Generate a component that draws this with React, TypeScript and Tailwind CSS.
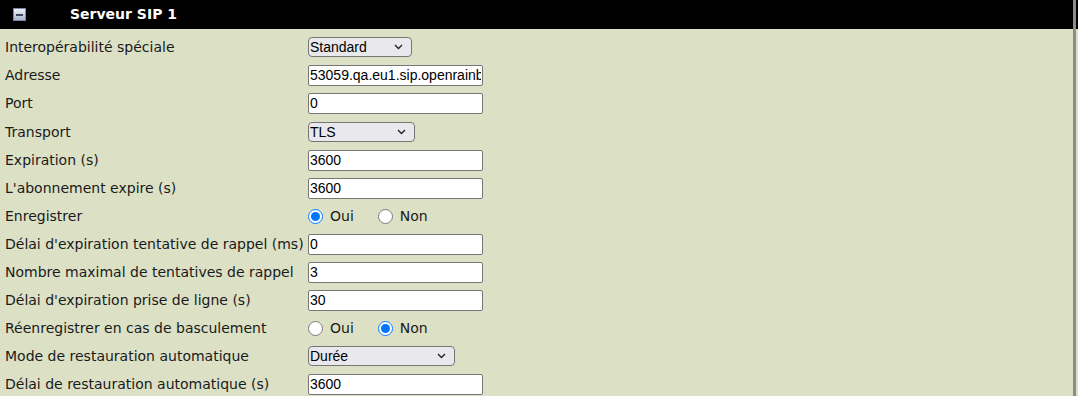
const label = "font-['DejaVu_Sans',Verdana,sans-serif] text-[14px] text-[#1a1a1a]";
const field =
  "h-[21px] w-[175px] rounded-[2px] border border-[#767676] bg-white px-[1px] font-['Liberation_Sans',Arial,sans-serif] text-[14px] text-black outline-none";

type Row =
  | { label: string; kind: "text"; value: string }
  | { label: string; kind: "select"; value: string; width: string }
  | { label: string; kind: "radio"; value: "oui" | "non"; name: string };

const rows: Row[] = [
  { label: "Interopérabilité spéciale", kind: "select", value: "Standard", width: "w-[104px]" },
  { label: "Adresse", kind: "text", value: "53059.qa.eu1.sip.openrainbow.net" },
  { label: "Port", kind: "text", value: "0" },
  { label: "Transport", kind: "select", value: "TLS", width: "w-[107px]" },
  { label: "Expiration (s)", kind: "text", value: "3600" },
  { label: "L'abonnement expire (s)", kind: "text", value: "3600" },
  { label: "Enregistrer", kind: "radio", value: "oui", name: "register" },
  { label: "Délai d'expiration tentative de rappel (ms)", kind: "text", value: "0" },
  { label: "Nombre maximal de tentatives de rappel", kind: "text", value: "3" },
  { label: "Délai d'expiration prise de ligne (s)", kind: "text", value: "30" },
  { label: "Réenregistrer en cas de basculement", kind: "radio", value: "non", name: "failover" },
  { label: "Mode de restauration automatique", kind: "select", value: "Durée", width: "w-[147px]" },
  { label: "Délai de restauration automatique (s)", kind: "text", value: "3600" },
];

function Control({ row }: { row: Row }) {
  if (row.kind === "text") {
    return <input type="text" defaultValue={row.value} className={field} />;
  }
  if (row.kind === "select") {
    return (
      <div
        className={`${row.width} flex h-[20px] items-center justify-between rounded-[4px] border border-[#767676] bg-[#e9e9ed] pl-[1px] pr-[8px] font-['Liberation_Sans',Arial,sans-serif] text-[14px] text-black`}
      >
        <span>{row.value}</span>
        <svg width="9" height="6" viewBox="0 0 9 6" fill="none">
          <path d="M1 1l3.5 3.5L8 1" stroke="#222" strokeWidth="1.4" />
        </svg>
      </div>
    );
  }
  return (
    <div className={`flex items-center ${label}`}>
      <label className="flex items-center gap-[7px]">
        <input type="radio" name={row.name} defaultChecked={row.value === "oui"} className="m-0 h-[15px] w-[15px]" />
        Oui
      </label>
      <label className="ml-[24px] flex items-center gap-[7px]">
        <input type="radio" name={row.name} defaultChecked={row.value === "non"} className="m-0 h-[15px] w-[15px]" />
        Non
      </label>
    </div>
  );
}

export default function App() {
  return (
    <div className="h-[396px] w-[1078px] overflow-hidden bg-[#dce1c6]">
      <div className="flex h-[29px] bg-black">
        <div className="flex w-[1073px] items-center">
          <div className="ml-[13px] flex h-[13px] w-[13px] items-center justify-center border border-[#7b88a3] bg-gradient-to-b from-[#eef1f8] to-[#aab5cc]">
            <div className="h-[2px] w-[7px] bg-[#3e4a63]" />
          </div>
          <span className="ml-[44px] font-['DejaVu_Sans',Verdana,sans-serif] text-[14px] font-bold text-white">
            Serveur SIP 1
          </span>
        </div>
        <div className="w-[3px] bg-[#8c8c8c]" />
      </div>
      <div className="flex">
        <div className="w-[1073px] pt-[4px]">
          {rows.map((row, i) => (
            <div key={row.label} className={`flex h-[28px] items-center ${i === 3 ? "mt-[1px]" : ""}`}>
              <div className={`w-[308px] pl-[5px] ${label}`}>{row.label}</div>
              <Control row={row} />
            </div>
          ))}
        </div>
        <div className="w-[3px] bg-[#8c8c8c]" />
      </div>
    </div>
  );
}
